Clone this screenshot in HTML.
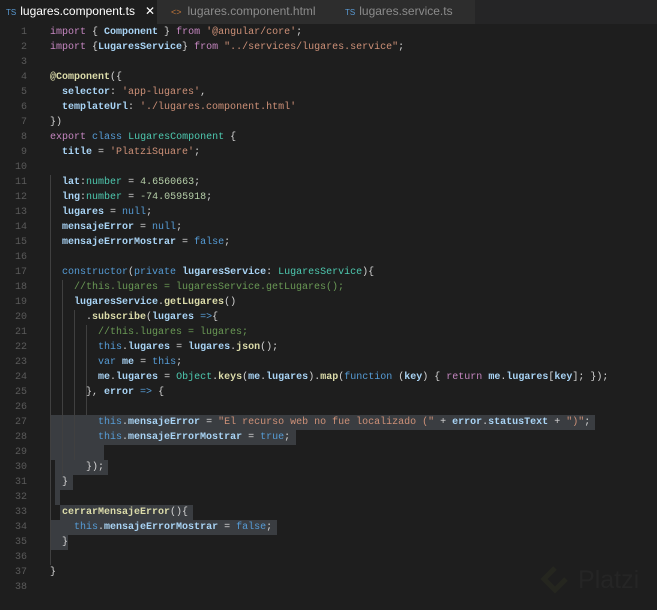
<!DOCTYPE html><html><head><style>
body{margin:0;width:657px;height:610px;background:#1e1e1e;overflow:hidden;position:relative;font-family:"Liberation Mono",monospace;}
.tabs{position:absolute;left:0;top:0;width:657px;height:24px;background:#252526;}
.tab{position:absolute;top:0;height:24px;background:#2d2d2d;font-family:"Liberation Sans",sans-serif;font-size:12px;line-height:23px;color:#8b8b8b;white-space:nowrap;overflow:hidden}
.tab.a{background:#1e1e1e;color:#fff;}
.ts{color:#5a9bd5;font-size:8px;margin-right:4px}
.ln{position:absolute;left:0;width:27px;text-align:right;color:#5a5a5a;font-size:10px;height:15px;line-height:15px}
.c{position:absolute;left:50px;font-size:10px;height:15px;line-height:15px;white-space:pre;color:#d4d4d4}
.sel{position:absolute;background:#3a3d41;height:15px}
.g{position:absolute;width:1px;background:#404040}
.k{color:#569cd6}.p{color:#c586c0}.s{color:#ce9178}.t{color:#4ec9b0}.f{color:#dcdcaa;font-weight:bold}.v{color:#a9d4f5;font-weight:bold}.n{color:#b5cea8}.cm{color:#6a9955}.w{color:#d4d4d4}
</style></head><body>
<div class="tabs">
<div class="tab a" style="left:0;width:157px;padding-left:6px;box-sizing:border-box"><span class="ts">TS</span>lugares.component.ts<span style="margin-left:10px">✕</span></div>
<div class="tab" style="left:157px;width:172px;padding-left:14px;box-sizing:border-box"><span style="color:#c0763a;font-size:9px;margin-right:6px">&lt;&gt;</span>lugares.component.html</div>
<div class="tab" style="left:329px;width:146px;padding-left:16px;box-sizing:border-box"><span class="ts">TS</span>lugares.service.ts</div>
</div>
<div class="sel" style="top:415px;left:50px;width:545px"></div>
<div class="sel" style="top:430px;left:50px;width:246px"></div>
<div class="sel" style="top:445px;left:50px;width:54px"></div>
<div class="sel" style="top:460px;left:55px;width:53px"></div>
<div class="sel" style="top:475px;left:55px;width:18px"></div>
<div class="sel" style="top:490px;left:55px;width:5px"></div>
<div class="sel" style="top:505px;left:60px;width:133px"></div>
<div class="sel" style="top:520px;left:50px;width:227px"></div>
<div class="sel" style="top:535px;left:50px;width:18px"></div>
<div class="g" style="left:50px;top:175px;height:390px"></div>
<div class="g" style="left:62px;top:280px;height:195px"></div>
<div class="g" style="left:74px;top:310px;height:150px"></div>
<div class="g" style="left:86px;top:325px;height:90px"></div>
<div class="ln" style="top:25px">1</div><div class="ln" style="top:40px">2</div><div class="ln" style="top:55px">3</div><div class="ln" style="top:70px">4</div><div class="ln" style="top:85px">5</div><div class="ln" style="top:100px">6</div><div class="ln" style="top:115px">7</div><div class="ln" style="top:130px">8</div><div class="ln" style="top:145px">9</div><div class="ln" style="top:160px">10</div><div class="ln" style="top:175px">11</div><div class="ln" style="top:190px">12</div><div class="ln" style="top:205px">13</div><div class="ln" style="top:220px">14</div><div class="ln" style="top:235px">15</div><div class="ln" style="top:250px">16</div><div class="ln" style="top:265px">17</div><div class="ln" style="top:280px">18</div><div class="ln" style="top:295px">19</div><div class="ln" style="top:310px">20</div><div class="ln" style="top:325px">21</div><div class="ln" style="top:340px">22</div><div class="ln" style="top:355px">23</div><div class="ln" style="top:370px">24</div><div class="ln" style="top:385px">25</div><div class="ln" style="top:400px">26</div><div class="ln" style="top:415px">27</div><div class="ln" style="top:430px">28</div><div class="ln" style="top:445px">29</div><div class="ln" style="top:460px">30</div><div class="ln" style="top:475px">31</div><div class="ln" style="top:490px">32</div><div class="ln" style="top:505px">33</div><div class="ln" style="top:520px">34</div><div class="ln" style="top:535px">35</div><div class="ln" style="top:550px">36</div><div class="ln" style="top:565px">37</div><div class="ln" style="top:580px">38</div>
<div class="c" style="top:25px"><span class="p">import</span> { <span class="v">Component</span> } <span class="p">from</span> <span class="s">'@angular/core'</span>;</div>
<div class="c" style="top:40px"><span class="p">import</span> {<span class="v">LugaresService</span>} <span class="p">from</span> <span class="s">"../services/lugares.service"</span>;</div>
<div class="c" style="top:70px"><span class="f">@Component</span>({</div>
<div class="c" style="top:85px">  <span class="v">selector</span>: <span class="s">'app-lugares'</span>,</div>
<div class="c" style="top:100px">  <span class="v">templateUrl</span>: <span class="s">'./lugares.component.html'</span></div>
<div class="c" style="top:115px">})</div>
<div class="c" style="top:130px"><span class="p">export</span> <span class="k">class</span> <span class="t">LugaresComponent</span> {</div>
<div class="c" style="top:145px">  <span class="v">title</span> = <span class="s">'PlatziSquare'</span>;</div>
<div class="c" style="top:175px">  <span class="v">lat</span>:<span class="t">number</span> = <span class="n">4.6560663</span>;</div>
<div class="c" style="top:190px">  <span class="v">lng</span>:<span class="t">number</span> = <span class="n">-74.0595918</span>;</div>
<div class="c" style="top:205px">  <span class="v">lugares</span> = <span class="k">null</span>;</div>
<div class="c" style="top:220px">  <span class="v">mensajeError</span> = <span class="k">null</span>;</div>
<div class="c" style="top:235px">  <span class="v">mensajeErrorMostrar</span> = <span class="k">false</span>;</div>
<div class="c" style="top:265px">  <span class="k">constructor</span>(<span class="k">private</span> <span class="v">lugaresService</span>: <span class="t">LugaresService</span>){</div>
<div class="c" style="top:280px">    <span class="cm">//this.lugares = lugaresService.getLugares();</span></div>
<div class="c" style="top:295px">    <span class="v">lugaresService</span>.<span class="f">getLugares</span>()</div>
<div class="c" style="top:310px">      .<span class="f">subscribe</span>(<span class="v">lugares</span> <span class="k">=&gt;</span>{</div>
<div class="c" style="top:325px">        <span class="cm">//this.lugares = lugares;</span></div>
<div class="c" style="top:340px">        <span class="k">this</span>.<span class="v">lugares</span> = <span class="v">lugares</span>.<span class="f">json</span>();</div>
<div class="c" style="top:355px">        <span class="k">var</span> <span class="v">me</span> = <span class="k">this</span>;</div>
<div class="c" style="top:370px">        <span class="v">me</span>.<span class="v">lugares</span> = <span class="t">Object</span>.<span class="f">keys</span>(<span class="v">me</span>.<span class="v">lugares</span>).<span class="f">map</span>(<span class="k">function</span> (<span class="v">key</span>) { <span class="p">return</span> <span class="v">me</span>.<span class="v">lugares</span>[<span class="v">key</span>]; });</div>
<div class="c" style="top:385px">      }, <span class="v">error</span> <span class="k">=&gt;</span> {</div>
<div class="c" style="top:415px">        <span class="k">this</span>.<span class="v">mensajeError</span> = <span class="s">"El recurso web no fue localizado ("</span> + <span class="v">error</span>.<span class="v">statusText</span> + <span class="s">")"</span>;</div>
<div class="c" style="top:430px">        <span class="k">this</span>.<span class="v">mensajeErrorMostrar</span> = <span class="k">true</span>;</div>
<div class="c" style="top:460px">      });</div>
<div class="c" style="top:475px">  }</div>
<div class="c" style="top:505px">  <span class="f">cerrarMensajeError</span>(){</div>
<div class="c" style="top:520px">    <span class="k">this</span>.<span class="v">mensajeErrorMostrar</span> = <span class="k">false</span>;</div>
<div class="c" style="top:535px">  }</div>
<div class="c" style="top:565px">}</div>
<svg style="position:absolute;left:540px;top:565px" width="30" height="34"><path d="M15 3 L4 14 L15 25 L26 14" fill="none" stroke="#25261f" stroke-width="5"/></svg>
<div style="position:absolute;left:578px;top:566px;font-family:'Liberation Sans',sans-serif;font-size:25px;color:#252525">Platzi</div>
</body></html>
